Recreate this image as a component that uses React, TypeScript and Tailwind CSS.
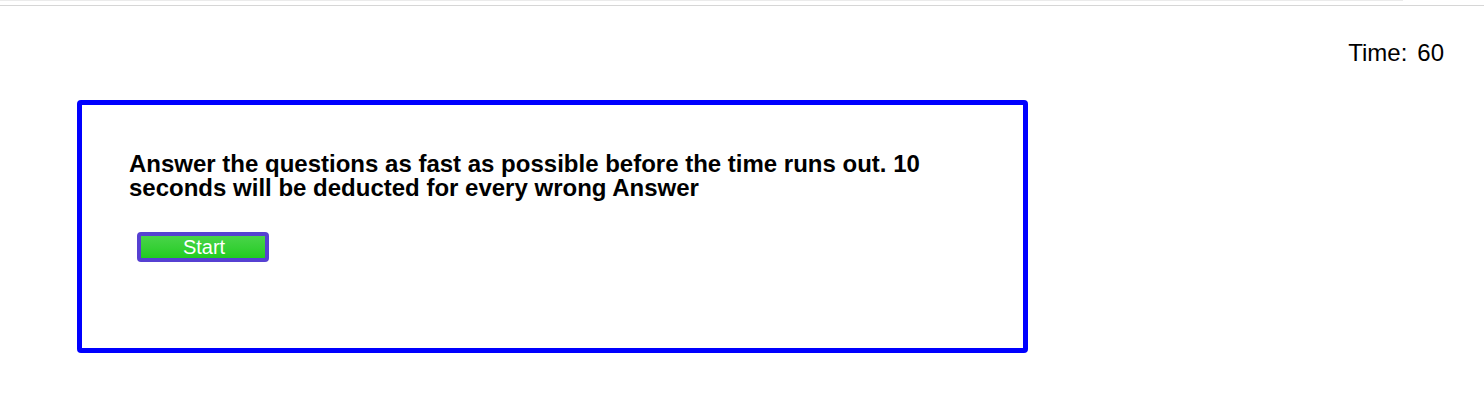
export default function App() {
  return (
    <div className="min-h-[400px] w-full bg-white font-['Liberation_Sans',Arial,sans-serif] text-black">
      <div className="h-px w-[1403px] bg-[#ebebeb]" />
      <div className="mt-[4px] h-px w-full bg-[#d6d6d6]" />

      <div className="flex justify-end pr-[40px] pt-[33px] text-[24px] leading-[28px]">
        <span>Time:</span>
        <span className="ml-[10px]">60</span>
      </div>

      <div className="ml-[77px] mt-[33px] h-[253px] w-[951px] rounded-[4px] border-[5px] border-[#0000ff] px-[47px] pt-[47px]">
        <p className="text-[24px] font-bold leading-[24px]">
          Answer the questions as fast as possible before the time runs out. 10
          <br />
          seconds will be deducted for every wrong Answer
        </p>
        <button className="ml-[8px] mt-[32px] flex h-[30px] w-[132px] items-center justify-center rounded-[4px] border-[4px] border-[#5640d2] bg-gradient-to-b from-[#48d448] to-[#1fcc1f] pl-[2px] text-[20px] leading-none text-white">
          Start
        </button>
      </div>
    </div>
  );
}
